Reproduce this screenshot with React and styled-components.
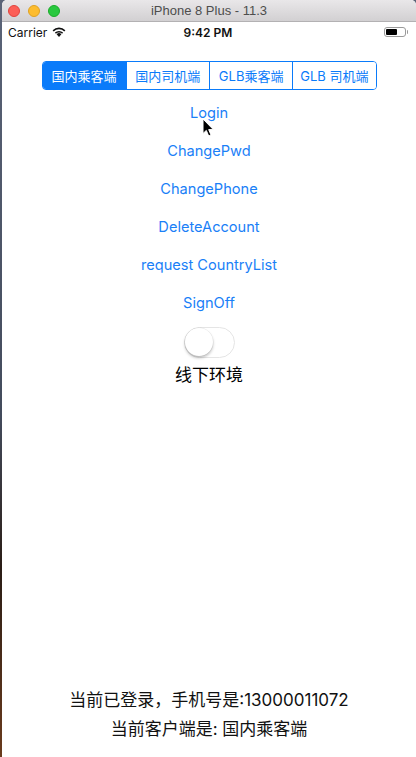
import React, { useState } from 'react';
import styled, { createGlobalStyle, css } from 'styled-components';

const GlobalStyle = createGlobalStyle`
	html, body {
		margin: 0;
		padding: 0;
		background: #3b4150;
	}
	* {
		box-sizing: border-box;
	}
`;

const BLUE = '#0a7bfa';
const CJK = `Inter, 'Noto Sans CJK SC', 'Noto Sans', sans-serif`;

const Desktop = styled.div`
	display: flex;
	height: 757px;
	width: 416px;
	background: linear-gradient(180deg, #5b6478 0%, #434b5c 55%, #2a1d16 75%, #6a3b1d 100%);
	padding-left: 2px;
`;

const Window = styled.div`
	flex: 1;
	display: flex;
	flex-direction: column;
	background: #fff;
	border-radius: 5px 5px 0 0;
	overflow: hidden;
	position: relative;
`;

const TitleBar = styled.div`
	height: 22px;
	flex: none;
	display: flex;
	align-items: center;
	position: relative;
	background: linear-gradient(180deg, #e9e7e9 0%, #d2d0d2 100%);
	border-bottom: 1px solid #b3b1b3;
	padding-left: 6px;
	gap: 8px;
`;

const Light = styled.span`
	width: 12px;
	height: 12px;
	border-radius: 50%;
	background: ${(p) => p.color};
	border: 0.5px solid ${(p) => p.edge};
`;

const Title = styled.div`
	position: absolute;
	left: 0;
	right: 0;
	text-align: center;
	font: 13px 'Liberation Sans', Arial, sans-serif;
	color: #4d4d4d;
	pointer-events: none;
`;

const StatusBar = styled.div`
	height: 20px;
	flex: none;
	display: grid;
	grid-template-columns: 1fr auto 1fr;
	align-items: center;
	padding: 0 8px 0 6px;
	font-family: Inter, 'Liberation Sans', sans-serif;
	font-size: 12px;
	color: #111;
`;

const Carrier = styled.div`
	display: flex;
	align-items: center;
	gap: 5px;
`;

const Clock = styled.div`
	font-weight: 600;
	font-size: 12px;
`;

const Battery = styled.div`
	justify-self: end;
	display: flex;
	align-items: center;
	gap: 1px;
`;

const BatteryBody = styled.div`
	width: 22px;
	height: 10px;
	border: 1px solid #9a9a9a;
	border-radius: 3px;
	padding: 1px;
	&::after {
		content: '';
		display: block;
		width: 62%;
		height: 100%;
		background: #000;
		border-radius: 1px;
	}
`;

const BatteryTip = styled.div`
	width: 1.5px;
	height: 4px;
	background: #9a9a9a;
	border-radius: 0 1px 1px 0;
`;

const Content = styled.div`
	flex: 1;
	display: flex;
	flex-direction: column;
	align-items: center;
	padding-top: 19px;
	padding-bottom: 13px;
`;

const Segmented = styled.div`
	display: grid;
	grid-template-columns: repeat(4, 1fr);
	width: 335px;
	height: 29px;
	border: 1px solid ${BLUE};
	border-radius: 4px;
	overflow: hidden;
	margin-bottom: 4px;
`;

const Segment = styled.div`
	display: flex;
	align-items: center;
	justify-content: center;
	font-family: ${CJK};
	font-size: 13px;
	color: ${BLUE};
	background: #fff;
	& + & {
		border-left: 1px solid ${BLUE};
	}
	${(p) =>
		p.active &&
		css`
			background: ${BLUE};
			color: #fff;
		`};
`;

const ActionButton = styled.div`
	height: 38px;
	display: flex;
	align-items: center;
	justify-content: center;
	font-family: Inter, 'Liberation Sans', sans-serif;
	font-size: 14.6px;
	color: #1a80f7;
	position: relative;
`;

const Switch = styled.div`
	width: 51px;
	height: 31px;
	border-radius: 16px;
	border: 1.5px solid #e5e5e5;
	background: #fff;
	margin-top: 5px;
	position: relative;
	&::after {
		content: '';
		position: absolute;
		left: 0;
		top: 0;
		width: 28px;
		height: 28px;
		border-radius: 50%;
		background: #fff;
		box-shadow: 0 2px 3px rgba(0, 0, 0, 0.25), 0 0 0 0.5px rgba(0, 0, 0, 0.08);
	}
`;

const Label = styled.div`
	font-family: ${CJK};
	font-size: 17px;
	color: #000;
	margin-top: 3px;
	line-height: 28px;
`;

const Footer = styled.div`
	margin-top: auto;
	display: flex;
	flex-direction: column;
	align-items: center;
`;

const FooterLine = styled.div`
	font-family: ${CJK};
	font-size: 17px;
	line-height: 29px;
	color: #111;
`;

const Cursor = styled.svg`
	position: absolute;
	left: 12px;
	top: 24px;
`;

const WifiIcon = () => (
	<svg width='14' height='10' viewBox='0 0 14 10'>
		<path d='M7 10 L4.6 7.3 A3.4 3.4 0 0 1 9.4 7.3 Z' fill='#111' />
		<path d='M2.9 5.6 A5.8 5.8 0 0 1 11.1 5.6 L10.1 6.7 A4.3 4.3 0 0 0 3.9 6.7 Z' fill='#111' />
		<path d='M0.6 3.2 A9.2 9.2 0 0 1 13.4 3.2 L12.3 4.4 A7.6 7.6 0 0 0 1.7 4.4 Z' fill='#111' />
	</svg>
);

const segments = ['国内乘客端', '国内司机端', 'GLB乘客端', 'GLB 司机端'];
const actions = ['Login', 'ChangePwd', 'ChangePhone', 'DeleteAccount', 'request CountryList', 'SignOff'];

export default function App() {
	const [active, setActive] = useState(0);

	return (
		<>
			<GlobalStyle />
			<Desktop>
				<Window>
					<TitleBar>
						<Light color='#fc5f57' edge='#e0443e' />
						<Light color='#fdbc2e' edge='#dea123' />
						<Light color='#29c83f' edge='#1aab29' />
						<Title>iPhone 8 Plus - 11.3</Title>
					</TitleBar>
					<StatusBar>
						<Carrier>
							Carrier
							<WifiIcon />
						</Carrier>
						<Clock>9:42 PM</Clock>
						<Battery>
							<BatteryBody />
							<BatteryTip />
						</Battery>
					</StatusBar>
					<Content>
						<Segmented>
							{segments.map((s, i) => (
								<Segment key={s} active={i === active} onClick={() => setActive(i)}>
									{s}
								</Segment>
							))}
						</Segmented>
						{actions.map((a, i) => (
							<ActionButton key={a}>
								{a}
								{i === 0 ? (
									<Cursor width='13' height='19' viewBox='0 0 13 19'>
										<path
											d='M1 1 L1 15.5 L4.3 12.4 L6.7 18 L9 17 L6.7 11.6 L11.3 11.6 Z'
											fill='#000'
											stroke='#fff'
											strokeWidth='1'
											strokeLinejoin='round'
										/>
									</Cursor>
								) : null}
							</ActionButton>
						))}
						<Switch />
						<Label>线下环境</Label>
						<Footer>
							<FooterLine>当前已登录，手机号是:13000011072</FooterLine>
							<FooterLine>当前客户端是: 国内乘客端</FooterLine>
						</Footer>
					</Content>
				</Window>
			</Desktop>
		</>
	);
}
